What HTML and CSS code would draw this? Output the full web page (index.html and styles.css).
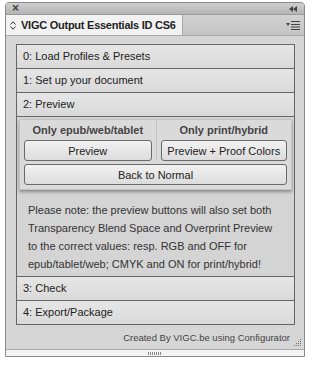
FILE: index.html
```html
<!DOCTYPE html>
<html lang="en">
  <head>
    <meta charset="UTF-8" />
    <meta name="viewport" content="width=device-width, initial-scale=1.0" />
    <title>VIGC Output Essentials</title>
    <link rel="stylesheet" href="styles.css">
  </head>
  <body>
    <div class="window">
      <div class="titlebar">
        <span class="close">&times;</span>
        <svg class="collapse" width="8" height="6" viewBox="0 0 8 6">
          <path d="M4 0 L0 3 L4 6 Z M8 0 L4 3 L8 6 Z" fill="#444" />
        </svg>
      </div>
      <div class="tabbar">
        <div class="tab">
          <svg class="updown" width="6" height="9" viewBox="0 0 6 9">
            <path d="M0.5 3.5 L3 0.8 L5.5 3.5 M0.5 5.5 L3 8.2 L5.5 5.5" fill="none" stroke="#333" stroke-width="1" />
          </svg>
          <span>VIGC Output Essentials ID CS6</span>
        </div>
        <div class="tab-rest">
          <svg class="menu" width="14" height="9" viewBox="0 0 14 9">
            <path d="M0 2 L4 2 L2 5 Z" fill="#444" />
            <path d="M5 0.5 H14 M5 3.5 H14 M5 6 H14 M5 8.5 H14" stroke="#444" stroke-width="1" />
          </svg>
        </div>
      </div>
      <div class="panel">
        <div class="accordion">
          <div class="row">0: Load Profiles &amp; Presets</div>
          <div class="row">1: Set up your document</div>
          <div class="row">2: Preview</div>
          <div class="content">
            <div class="group">
              <div class="cols">
                <div class="col">
                  <div class="col-title">Only epub/web/tablet</div>
                  <button class="btn">Preview</button>
                </div>
                <div class="col">
                  <div class="col-title">Only print/hybrid</div>
                  <button class="btn">Preview + Proof Colors</button>
                </div>
              </div>
              <button class="btn btn-wide">Back to Normal</button>
            </div>
            <p class="note">Please note: the preview buttons will also set both Transparency Blend Space and Overprint Preview to the correct values: resp. RGB and OFF for epub/tablet/web; CMYK and ON for print/hybrid!</p>
          </div>
          <div class="row">3: Check</div>
          <div class="row">4: Export/Package</div>
        </div>
        <div class="credit">Created By VIGC.be using Configurator</div>
        <svg class="grip" width="9" height="9" viewBox="0 0 9 9">
          <g fill="#777">
            <rect x="7" y="1" width="1" height="1" />
            <rect x="5" y="3" width="1" height="1" /><rect x="7" y="3" width="1" height="1" />
            <rect x="3" y="5" width="1" height="1" /><rect x="5" y="5" width="1" height="1" /><rect x="7" y="5" width="1" height="1" />
            <rect x="1" y="7" width="1" height="1" /><rect x="3" y="7" width="1" height="1" /><rect x="5" y="7" width="1" height="1" /><rect x="7" y="7" width="1" height="1" />
          </g>
        </svg>
      </div>
      <div class="bottombar">
        <span class="handle"></span>
      </div>
    </div>
  </body>
</html>
```
FILE: styles.css
```css
html,
body {
  margin: 0;
  background: #fff;
  font-family: "Liberation Sans", Arial, sans-serif;
  color: #222;
}

.window {
  width: 298px;
  margin: 2px 0 0 5px;
  border: 1px solid #8a8a8a;
  border-radius: 4px 4px 0 0;
  background: #d6d6d6;
}

.titlebar {
  height: 11px;
  display: flex;
  align-items: center;
  justify-content: space-between;
  padding: 0 7px 0 6px;
  background: linear-gradient(#cfcfcf, #b4b4b4);
  border-radius: 3px 3px 0 0;
  border-bottom: 1px solid #9a9a9a;
}

.close {
  font-size: 12px;
  font-weight: bold;
  line-height: 11px;
  color: #444;
}

.tabbar {
  display: flex;
  height: 20px;
  border-bottom: 1px solid #a8a8a8;
}

.tab {
  display: flex;
  align-items: center;
  gap: 5px;
  width: 172px;
  padding-left: 4px;
  background: #f2f2f2;
  border-right: 1px solid #a8a8a8;
  font-size: 11px;
  font-weight: bold;
  letter-spacing: -0.25px;
  white-space: nowrap;
  color: #222;
}

.tab-rest {
  flex: 1;
  display: flex;
  align-items: center;
  justify-content: flex-end;
  padding-right: 4px;
  background: linear-gradient(#d2d2d2, #c4c4c4);
}

.panel {
  position: relative;
  box-sizing: border-box;
  height: 313px;
  padding: 8px 9px 0 10px;
}

.accordion {
  border: 1px solid #666;
  background: #d4d4d4;
}

.row {
  height: 23px;
  line-height: 23px;
  padding-left: 6px;
  font-size: 11px;
  background: linear-gradient(#e6e6e6, #d9d9d9);
  border-bottom: 1px solid #666;
}

.row:last-child {
  border-bottom: none;
}

.content {
  padding: 2px 2px 0;
  border-bottom: 1px solid #666;
}

.group {
  background: #dadada;
  border: 1px solid #c4c4c4;
  box-shadow: 0 2px 3px rgba(0, 0, 0, 0.35);
  padding: 0 4px 4px;
}

.cols {
  display: grid;
  grid-template-columns: 1fr 1fr;
  margin: 0 -4px;
}

.col {
  display: flex;
  flex-direction: column;
  padding: 0 4px;
}

.col + .col {
  border-left: 1px solid #c4c4c4;
}

.col-title {
  height: 20px;
  line-height: 20px;
  text-align: center;
  font-size: 11px;
  font-weight: bold;
  color: #444;
}

.btn {
  display: block;
  height: 21px;
  margin: 0;
  padding: 0;
  border: 1px solid #6a6a6a;
  border-radius: 3px;
  background: linear-gradient(#f2f2f2, #dcdcdc);
  font-family: inherit;
  font-size: 11px;
  color: #222;
}

.btn-wide {
  width: 100%;
  margin-top: 3px;
}

.note {
  margin: 0;
  padding: 11px 8px 3px 9px;
  font-size: 11px;
  line-height: 18px;
  color: #333;
}

.credit {
  margin-top: 7px;
  padding-right: 5px;
  text-align: right;
  font-size: 9.5px;
  color: #444;
}

.grip {
  position: absolute;
  right: 2px;
  bottom: 2px;
}

.bottombar {
  height: 6px;
  display: flex;
  justify-content: center;
  align-items: center;
  background: #f4f4f4;
  border-top: 1px solid #aaa;
}

.handle {
  width: 14px;
  height: 3px;
  background: repeating-linear-gradient(90deg, #888 0 1px, transparent 1px 2px);
}
```
